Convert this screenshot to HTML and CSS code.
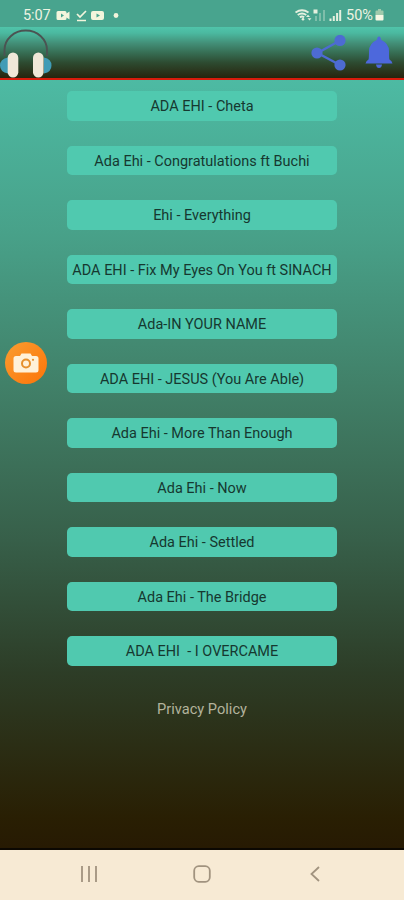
FILE: index.html
```
<!DOCTYPE html>
<html lang="en">
<head>
<meta charset="utf-8">
<meta name="viewport" content="width=device-width, initial-scale=1">
<title>Ada Ehi Songs</title>
<link rel="stylesheet" href="styles.css">
</head>
<body>
<div class="phone">
  <div class="status">
    <span class="clock">5:07</span>
    <svg class="status-left" width="64" height="14" viewBox="0 0 64 14" fill="#f3f5dc">
      <path fill-rule="evenodd" d="M2 3h7q1.500 0 1.500 1.500v1l3-2v8l-3-2v1q0 1.500-1.500 1.500h-7q-1.500 0-1.500-1.500v-6q0-1.500 1.500-1.500zM5 5.500v4l3-2z"/>
      <path d="M21 6l3 3 6-6M21 12.500h9" fill="none" stroke="#f3f5dc" stroke-width="1.700"/>
      <path fill-rule="evenodd" d="M37 3h9q2 0 2 2v5q0 2-2 2h-9q-2 0-2-2v-5q0-2 2-2zM40.500 5.500v4l3.500-2z"/>
      <circle cx="60" cy="7.500" r="2.400"/>
    </svg>
    <svg class="status-right" width="47" height="14" viewBox="0 0 47 14" fill="#e6f0df">
      <g fill="none" stroke="#e6f0df" stroke-width="1.800">
        <path d="M0.500 4.500q6.500-4.500 13 0M2.700 7q4.300-3 8.600 0M4.800 9.300q2.200-1.600 4.400 0"/>
      </g>
      <circle cx="8" cy="11.300" r="1.300"/>
      <path d="M11 9l2-2.300 2 2.300zM12.500 10.200h4l-2 2.400z"/>
      <path d="M18.500 1.500h4v4h-4z"/>
      <path d="M20 8h2v5h-2zM24 5h2v8h-2zM28 2h2v11h-2z" opacity=".35"/>
      <path d="M34.500 10.500h2v2.500h-2zM37.800 8h2v5h-2zM41.100 5h2v8h-2zM44.200 2h2v11h-2z"/>
    </svg>
    <span class="percent">50%</span>
    <svg class="battery" width="9" height="12" viewBox="0 0 9 12">
      <path d="M3 0h3v1.500h1.500q1 0 1 1V6h-8V2.500q0-1 1-1H3z" fill="#9fcaac"/>
      <path d="M.5 6h8v4.500q0 1-1 1h-6q-1 0-1-1z" fill="#f7f8e5"/>
    </svg>
  </div>

  <header class="toolbar">
    <svg class="headphones" width="52" height="50" viewBox="0 0 52 50">
      <path d="M4.500 28V22a21.200 19.500 0 0 1 42.500 0v6" fill="none" stroke="#4b5352" stroke-width="1.900"/>
      <path d="M8 29.500Q0 31 0 37.500T8 45.500zM44 29.500Q51.500 31 51.500 37.500T44 45.500z" fill="#409cb6"/>
      <rect x="7.700" y="24.500" width="10.600" height="25" rx="5.300" fill="#f0e8d8"/>
      <rect x="33" y="24.500" width="10.600" height="25" rx="5.300" fill="#f0e8d8"/>
    </svg>
    <div class="actions">
      <svg width="36" height="36" viewBox="0 0 36 36" fill="#4d6bd2">
        <path d="M29 5.500L6.500 18 29 30" fill="none" stroke="#4d6bd2" stroke-width="2.400"/>
        <circle cx="29" cy="5.500" r="5.600"/><circle cx="6" cy="18" r="5.600"/><circle cx="29" cy="30" r="5.600"/>
      </svg>
      <svg width="28" height="34" viewBox="0 0 28 34" fill="#4d68dc">
        <path d="M14 .5q1.600 0 2 3.200Q24 7.500 24 15q0 7 .5 8.500 2.500 1.500 3 4H.5q.5-2.500 3-4Q4 22 4 15q0-7.500 8-11.300.4-3.200 2-3.200z"/>
        <path d="M11 28.500h6q-.5 3.500-3 3.500t-3-3.500z"/>
      </svg>
    </div>
  </header>

  <main class="content">
    <div class="songs">
      <button class="song">ADA EHI - Cheta</button>
      <button class="song">Ada Ehi - Congratulations ft Buchi</button>
      <button class="song">Ehi - Everything</button>
      <button class="song">ADA EHI - Fix My Eyes On You ft SINACH</button>
      <button class="song">Ada-IN YOUR NAME</button>
      <button class="song">ADA EHI - JESUS (You Are Able)</button>
      <button class="song">Ada Ehi - More Than Enough</button>
      <button class="song">Ada Ehi - Now</button>
      <button class="song">Ada Ehi - Settled</button>
      <button class="song">Ada Ehi - The Bridge</button>
      <button class="song">ADA EHI&nbsp; - I OVERCAME</button>
    </div>
    <a class="privacy">Privacy Policy</a>
  </main>

  <nav class="navbar">
    <svg width="18" height="18" viewBox="0 0 18 18"><path d="M2 1v16M9 1v16M16 1v16"/></svg>
    <svg width="18" height="18" viewBox="0 0 18 18"><rect x="1.200" y="1.200" width="15.600" height="15.600" rx="4.500"/></svg>
    <svg width="18" height="18" viewBox="0 0 18 18"><path d="M13 2L5.500 9l7.500 7"/></svg>
  </nav>

  <div class="camera">
    <svg width="26" height="20" viewBox="0 0 26 20">
      <path d="M3 3h4l1.500-2.500h9L19 3h4q2.500 0 2.500 2.500v11.500q0 2.500-2.500 2.500H3Q.5 19.500.5 17V5.500Q.5 3 3 3z" fill="#fff1d9"/>
      <circle cx="13" cy="10.500" r="4" fill="none" stroke="#e6902d" stroke-width="2"/>
      <circle cx="20" cy="6.800" r="1.100" fill="#e6902d"/>
    </svg>
  </div>
</div>
</body>
</html>
```
FILE: styles.css
```
* { box-sizing: border-box; }

body {
  margin: 0;
  font-family: Roboto, "Liberation Sans", sans-serif;
}

svg { display: block; flex: none; }

.phone {
  position: relative;
  display: flex;
  flex-direction: column;
  width: 404px;
  height: 900px;
  overflow: hidden;
}

.status {
  display: flex;
  align-items: center;
  height: 27px;
  padding: 3px 20px 0 23px;
  background: #48a48e;
  color: #edf3e2;
  font-size: 14.5px;
}

.clock { width: 33px; letter-spacing: -0.1px; }
.status-right { margin-left: auto; }
.percent { width: 28px; margin-left: 4px; font-size: 14.5px; }
.battery { margin-left: 1px; }

.toolbar {
  display: flex;
  justify-content: space-between;
  height: 53px;
  border-bottom: 2px solid #d91b0c;
  background: linear-gradient(#50c4aa 0, #4bb9a0 6px, #439078 16px, #35694f 27px, #2d4a30 36px, #28240d 51px);
}

.headphones { margin-top: 1px; }

.actions {
  display: flex;
  gap: 18px;
  padding: 8px 11px 0 0;
}

.actions svg + svg { margin-top: 1px; }

.content {
  display: flex;
  flex: 1;
  flex-direction: column;
  align-items: center;
  padding-top: 11px;
  border-bottom: 2px solid #0c0802;
  background: linear-gradient(#4dbaa3 0, #48a189 20%, #418068 40%, #375f49 60%, #2d3d27 77%, #291f03 96%, #271a03 100%);
}

.songs {
  display: grid;
  gap: 25px;
  width: 270px;
}

.song {
  height: 29.5px;
  padding: 2px 0 0;
  border: 0;
  border-radius: 5px;
  background: #50c9af;
  color: #16382f;
  font: 14.47px Roboto, "Liberation Sans", sans-serif;
  white-space: nowrap;
}

.privacy {
  margin-top: 34px;
  color: #b3b39c;
  font-size: 14.6px;
  line-height: 18px;
}

.navbar {
  display: flex;
  justify-content: space-between;
  height: 50px;
  padding: 15px 80px 0;
  background: #f7ead4;
}

.navbar svg {
  fill: none;
  stroke: #a1937f;
  stroke-width: 1.8;
}

.camera {
  position: absolute;
  top: 342px;
  left: 5px;
  display: grid;
  place-items: center;
  width: 42px;
  height: 42px;
  border-radius: 50%;
  background: linear-gradient(135deg, #fa9d31, #fc7408);
}
```
